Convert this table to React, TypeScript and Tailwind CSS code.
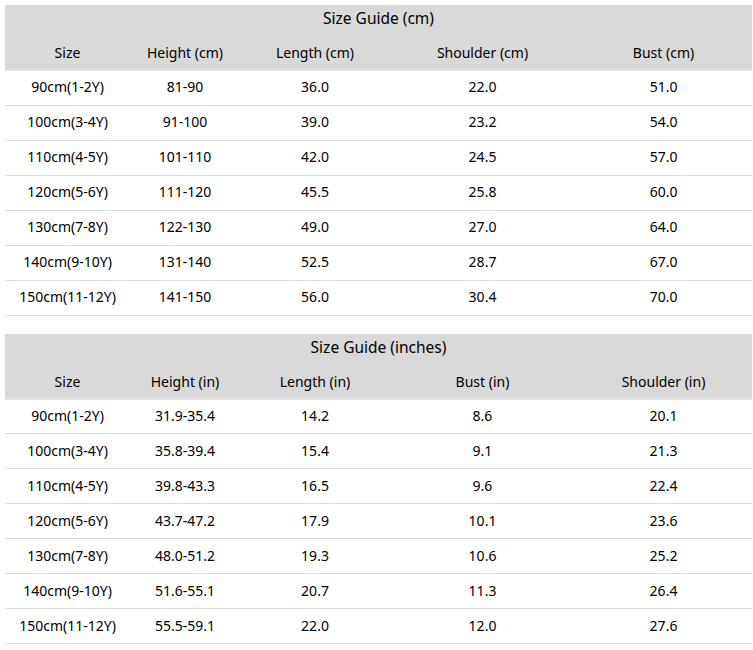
const widths = ["w-[125px]", "w-[110px]", "w-[150px]", "w-[185px]", "w-[177px]"];

const cmRows = [
  ["90cm(1-2Y)", "81-90", "36.0", "22.0", "51.0"],
  ["100cm(3-4Y)", "91-100", "39.0", "23.2", "54.0"],
  ["110cm(4-5Y)", "101-110", "42.0", "24.5", "57.0"],
  ["120cm(5-6Y)", "111-120", "45.5", "25.8", "60.0"],
  ["130cm(7-8Y)", "122-130", "49.0", "27.0", "64.0"],
  ["140cm(9-10Y)", "131-140", "52.5", "28.7", "67.0"],
  ["150cm(11-12Y)", "141-150", "56.0", "30.4", "70.0"],
];

const inRows = [
  ["90cm(1-2Y)", "31.9-35.4", "14.2", "8.6", "20.1"],
  ["100cm(3-4Y)", "35.8-39.4", "15.4", "9.1", "21.3"],
  ["110cm(4-5Y)", "39.8-43.3", "16.5", "9.6", "22.4"],
  ["120cm(5-6Y)", "43.7-47.2", "17.9", "10.1", "23.6"],
  ["130cm(7-8Y)", "48.0-51.2", "19.3", "10.6", "25.2"],
  ["140cm(9-10Y)", "51.6-55.1", "20.7", "11.3", "26.4"],
  ["150cm(11-12Y)", "55.5-59.1", "22.0", "12.0", "27.6"],
];

function SizeTable({
  title,
  headers,
  rows,
}: {
  title: string;
  headers: string[];
  rows: string[][];
}) {
  return (
    <table className="w-[747px] table-fixed border-collapse text-center text-[14px] text-black">
      <colgroup>
        {widths.map((w) => (
          <col key={w} className={w} />
        ))}
      </colgroup>
      <thead>
        <tr className="bg-[#d9d9d9]">
          <th colSpan={5} className="h-[30px] pb-[2px] align-middle text-[15.5px] font-normal">
            {title}
          </th>
        </tr>
        <tr className="border-b-2 border-[#e2e2e2] bg-[#d9d9d9]">
          {headers.map((h) => (
            <th key={h} className="h-[35px] pt-[1px] align-middle font-normal">
              {h}
            </th>
          ))}
        </tr>
      </thead>
      <tbody>
        {rows.map((r) => (
          <tr key={r[0]} className="border-b border-[#dcdcdc]">
            {r.map((c, i) => (
              <td key={i} className="h-[35px] pb-[2px] align-middle">
                {c}
              </td>
            ))}
          </tr>
        ))}
      </tbody>
    </table>
  );
}

export default function App() {
  return (
    <div className="min-h-[650px] bg-white pl-[5px] pt-[5px] font-['Noto_Sans',sans-serif]">
      <SizeTable
        title="Size Guide (cm)"
        headers={["Size", "Height (cm)", "Length (cm)", "Shoulder (cm)", "Bust (cm)"]}
        rows={cmRows}
      />
      <div className="h-[18px]" />
      <SizeTable
        title="Size Guide (inches)"
        headers={["Size", "Height (in)", "Length (in)", "Bust (in)", "Shoulder (in)"]}
        rows={inRows}
      />
    </div>
  );
}
